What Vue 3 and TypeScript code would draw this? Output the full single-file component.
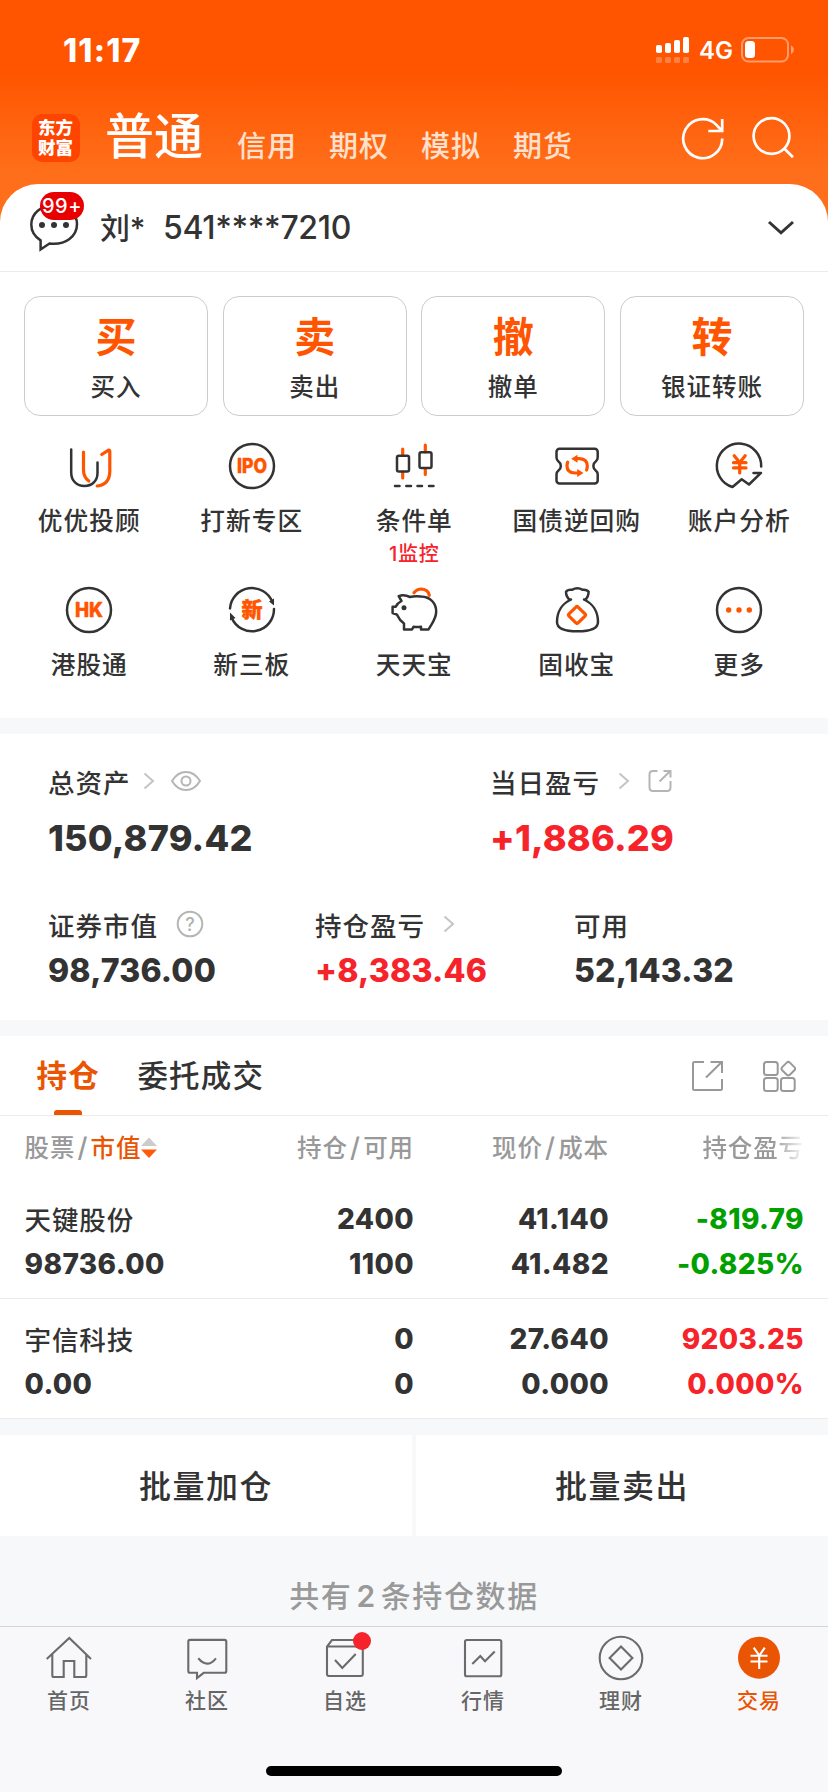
<script setup lang="ts">
interface Holding {
  name: string
  value: string
  qty: string
  available: string
  price: string
  cost: string
  profit: string
  rate: string
  trend: 'up' | 'down'
}

const markets: string[] = ['信用', '期权', '模拟', '期货']

const actions: { glyph: string; label: string }[] = [
  { glyph: '买', label: '买入' },
  { glyph: '卖', label: '卖出' },
  { glyph: '撤', label: '撤单' },
  { glyph: '转', label: '银证转账' },
]

const tools: { id: string; label: string; note?: string }[] = [
  { id: 'advisor', label: '优优投顾' },
  { id: 'ipo', label: '打新专区' },
  { id: 'candle', label: '条件单', note: '1监控' },
  { id: 'bond', label: '国债逆回购' },
  { id: 'analysis', label: '账户分析' },
  { id: 'hk', label: '港股通' },
  { id: 'neeq', label: '新三板' },
  { id: 'piggy', label: '天天宝' },
  { id: 'bag', label: '固收宝' },
  { id: 'more', label: '更多' },
]

const holdings: Holding[] = [
  { name: '天键股份', value: '98736.00', qty: '2400', available: '1100', price: '41.140', cost: '41.482', profit: '-819.79', rate: '-0.825%', trend: 'down' },
  { name: '宇信科技', value: '0.00', qty: '0', available: '0', price: '27.640', cost: '0.000', profit: '9203.25', rate: '0.000%', trend: 'up' },
]

const nav: { id: string; label: string }[] = [
  { id: 'home', label: '首页' },
  { id: 'community', label: '社区' },
  { id: 'watch', label: '自选' },
  { id: 'quotes', label: '行情' },
  { id: 'wealth', label: '理财' },
  { id: 'trade', label: '交易' },
]
</script>

<template>
  <div class="screen">
    <header class="top">
      <div class="status">
        <span class="clock">11:17</span>
        <div class="status-right">
          <svg class="signal" width="34" height="28" viewBox="0 0 34 28" fill="#fff">
            <rect x="0" y="9" width="6" height="8" rx="1.8" />
            <rect x="9" y="7" width="6" height="10" rx="1.8" />
            <rect x="18" y="4" width="6" height="13" rx="1.8" />
            <rect x="27" y="1" width="6" height="16" rx="1.8" />
            <g opacity=".25">
              <rect x="0" y="21" width="6" height="6" rx="1.5" />
              <rect x="9" y="21" width="6" height="6" rx="1.5" />
              <rect x="18" y="21" width="6" height="6" rx="1.5" />
              <rect x="27" y="21" width="6" height="6" rx="1.5" />
            </g>
          </svg>
          <span class="net">4G</span>
          <svg class="battery" width="54" height="26" viewBox="0 0 54 26">
            <rect x="1" y="1" width="46" height="23.5" rx="6.5" fill="none" stroke="#fff" stroke-opacity=".42" stroke-width="2" />
            <path d="M50 8.5a4.6 4.6 0 0 1 0 8.5z" fill="#fff" fill-opacity=".45" />
            <rect x="4" y="4" width="10" height="17" rx="3.5" fill="#fff" />
          </svg>
        </div>
      </div>
      <div class="market-bar">
        <div class="logo">东方财富</div>
        <span class="market-current">普通</span>
        <span v-for="m in markets" :key="m" class="market">{{ m }}</span>
        <svg class="top-icons" width="114" height="48" viewBox="0 0 114 48" fill="none" stroke="#fff" stroke-width="2.7">
          <path d="M41.2 24.5A19.5 19.5 0 1 1 35.2 10.6L41 17M27.3 17H41.2V5" />
          <circle cx="90.5" cy="22" r="17.9" />
          <path d="M103 34.3L112 43.3" />
        </svg>
      </div>
    </header>

    <section class="sheet">
      <div class="account">
        <div class="msg">
          <svg width="50" height="48" viewBox="0 0 50 48" fill="none" stroke="#333" stroke-width="2.5">
            <path d="M10.600 45.500V36.400C4.500 32.500 1.300 27 1.300 20.500C1.300 9.500 11 1.300 24 1.300S47 9.500 47 20C47 32 36 41.500 19.500 39.500Z" />
            <g fill="#333" stroke="none">
              <circle cx="12" cy="21" r="3" /><circle cx="24" cy="21" r="3" /><circle cx="36" cy="21" r="3" />
            </g>
          </svg>
          <span class="msg-badge">99+</span>
        </div>
        <span class="acc-name">刘*</span>
        <span class="acc-no">541****7210</span>
        <svg class="chevron" width="28" height="17" viewBox="0 0 28 17" fill="none" stroke="#333" stroke-width="3">
          <path d="M2 2L14 12.800L26 2" />
        </svg>
      </div>

      <div class="actions">
        <button v-for="a in actions" :key="a.glyph" class="action">
          <b>{{ a.glyph }}</b>
          <span>{{ a.label }}</span>
        </button>
      </div>

      <div class="tools">
        <div v-for="t in tools" :key="t.id" class="tool">
          <svg width="48" height="48" viewBox="0 0 48 48" class="tool-icon">
            <g v-if="t.id === 'advisor'">
              <path d="M6.200 7.500V30.500C6.200 39 12 44 19.400 44S32.500 39 32.500 31V20.500" />
              <path class="o" d="M18.500 10V28Q18.500 35 23.800 39" />
              <path class="o" d="M36.700 12.500L43.200 8.300Q44.800 7.500 44.800 9.500V29Q44.800 42.500 32.200 44" />
            </g>
            <g v-else-if="t.id === 'ipo'">
              <circle cx="24" cy="24" r="22" />
              <text x="24" y="31.300" font-size="20" textLength="30" lengthAdjust="spacingAndGlyphs">IPO</text>
            </g>
            <g v-else-if="t.id === 'candle'">
              <path class="o" d="M12.700 7V13M12.700 30V36M35.300 3V10M35.300 27V32.500" />
              <rect x="7" y="13.700" width="12" height="15.800" rx="1.800" />
              <rect x="29.500" y="10.300" width="12" height="15.800" rx="1.800" />
              <path d="M5 44H9.500M16.300 44H21M27.500 44H32M39 44H43.500" />
            </g>
            <g v-else-if="t.id === 'bond'">
              <path d="M6.500 6.700H41.700a3 3 0 0 1 3 3V15.500q0 2.500-2 4a5.500 5.500 0 0 0 0 9q2 1.500 2 4V38.500a3 3 0 0 1-3 3H6.500a3 3 0 0 1-3-3V32.500q0-2.500 2-4a5.500 5.500 0 0 0 0-9q-2-1.500-2-4V9.700a3 3 0 0 1 3-3z" />
              <path class="o" d="M22.500 16.700H26.500Q34.300 17 34.300 24Q34.300 26 33.600 28M25.500 31H22Q14 30.700 14 24Q14 22 14.700 20.200" />
              <path class="of" d="M18.200 16.800L24.500 12.800V20.800ZM30.500 31L24.200 27V35Z" />
            </g>
            <g v-else-if="t.id === 'analysis'">
              <path d="M46.200 24.500A22.200 22.200 0 1 0 17.500 45L26.700 37.300L34 42.500L46 30.900H38.500" />
              <path class="o" d="M19.200 13.800L24.700 20.500L30.200 13.800M24.700 20.500V31M18.500 20.700H31M18.500 25.900H31" />
            </g>
            <g v-else-if="t.id === 'hk'">
              <circle cx="24" cy="24" r="22" />
              <text x="24" y="31.200" font-size="20" textLength="28" lengthAdjust="spacingAndGlyphs">HK</text>
            </g>
            <g v-else-if="t.id === 'neeq'">
              <path d="M2 22.500A22 22 0 0 1 44.400 16M46 23A22 22 0 0 1 3.600 31.500" />
              <path class="df" d="M41 15.500L46 12.500V19.500ZM2 26.500V34.500L7.500 32Z" />
              <text x="24" y="31.300" font-size="21">新</text>
            </g>
            <g v-else-if="t.id === 'piggy'">
              <path d="M11.500 15L8.700 10.200Q14 8.200 20 11Q24 9.800 31 10.500C41 10.700 46.200 18 46.200 25.500C46.200 33 42 37 38.500 43.500H31V40.800Q27 41.300 23.500 40.800L22 43.500H14V37.500C10.500 35 8.500 32 7 28.700L2.600 27V20.800H5.500Q7.500 17 11.500 15Z" />
              <circle class="df" cx="14" cy="21.700" r="2.500" />
              <path class="o" d="M24 6.800Q27 3 31.500 3Q38.300 3.500 39.300 9.300" />
            </g>
            <g v-else-if="t.id === 'bag'">
              <path d="M17 14Q13 11 13 5.800Q14.500 3.400 19 3.800Q24.300 .8 29.700 3.800Q34 3.400 35.600 5.800Q35.600 11 32 14C39 17.500 45 25 45 36C45 43 37 45.300 24.500 45.300S4 43 4 36C4 25 10 17.500 17 14M15.800 13.500H18M31 13.500H33" />
              <rect class="o" x="17.600" y="22.600" width="12.800" height="12.800" rx="1.500" transform="rotate(45 24 29)" />
            </g>
            <g v-else>
              <circle cx="24" cy="24" r="22" />
              <circle class="of" cx="13.700" cy="24" r="2.700" /><circle class="of" cx="24" cy="24" r="2.700" /><circle class="of" cx="34.300" cy="24" r="2.700" />
            </g>
          </svg>
          <span class="tool-label">{{ t.label }}</span>
          <span v-if="t.note" class="tool-note">{{ t.note }}</span>
        </div>
      </div>
    </section>

    <section class="assets">
      <div class="asset-row first">
        <div class="asset big">
          <div class="asset-label">总资产
            <svg class="gt" width="12" height="18" viewBox="0 0 12 18"><path d="M1.500 1.500L10 9L1.500 16.500" /></svg>
            <svg class="eye" width="32" height="22" viewBox="0 0 32 22"><path d="M2 11Q7.500 2 16 2T30 11Q24.500 20 16 20T2 11Z" /><circle cx="16" cy="11" r="4.500" /></svg>
          </div>
          <div class="num">150,879.42</div>
        </div>
        <div class="asset big">
          <div class="asset-label">当日盈亏
            <svg class="gt wide" width="12" height="18" viewBox="0 0 12 18"><path d="M1.500 1.500L10 9L1.500 16.500" /></svg>
            <svg class="share" width="24" height="24" viewBox="0 0 24 24"><path d="M9.500 2H5Q1.500 2 1.500 5.500V18.500Q1.500 22 5 22H19Q22.500 22 22.500 18.500V12M11.500 12.500L22 2.200M15.500 2H22.500V8.500" /></svg>
          </div>
          <div class="num up">+1,886.29</div>
        </div>
      </div>
      <div class="asset-row second">
        <div class="asset">
          <div class="asset-label">证券市值
            <svg class="help" width="28" height="28" viewBox="0 0 28 28"><circle cx="14" cy="14" r="12.300" /><text x="14" y="20.500">?</text></svg>
          </div>
          <div class="num">98,736.00</div>
        </div>
        <div class="asset">
          <div class="asset-label">持仓盈亏
            <svg class="gt wide" width="12" height="18" viewBox="0 0 12 18"><path d="M1.500 1.500L10 9L1.500 16.500" /></svg>
          </div>
          <div class="num up">+8,383.46</div>
        </div>
        <div class="asset">
          <div class="asset-label">可用</div>
          <div class="num">52,143.32</div>
        </div>
      </div>
    </section>

    <section class="positions">
      <div class="tabs">
        <span class="tab active">持仓</span>
        <span class="tab">委托成交</span>
        <svg class="tab-icons" width="104" height="34" viewBox="0 0 104 34" fill="none" stroke="#999" stroke-width="2">
          <path d="M12 2H2.500Q1 2 1 3.500V28.500Q1 30 2.500 30H28.500Q30 30 30 28.500V19M14 17.500L29.500 2.300M18.500 2H30V13" />
          <rect x="72" y="2" width="13.700" height="13" rx="2.500" />
          <rect x="72" y="18" width="13.700" height="13" rx="2.500" />
          <rect x="89" y="18" width="13.700" height="13" rx="2.500" />
          <rect x="90.900" y="3.300" width="10.800" height="10.800" rx="2.200" transform="rotate(45 96.300 8.700)" />
        </svg>
      </div>
      <div class="grid head">
        <div>股票<i>/</i><em>市值</em><svg class="sort" width="16" height="22" viewBox="0 0 16 22"><path d="M8 .5L16 9H0Z" fill="#ccc" /><path d="M8 21L16 12.500H0Z" fill="#ff5a09" /></svg></div>
        <div>持仓<i>/</i>可用</div>
        <div>现价<i>/</i>成本</div>
        <div class="fade">持仓盈亏</div>
      </div>
      <div v-for="h in holdings" :key="h.name" class="grid row">
        <div><span class="name">{{ h.name }}</span><span>{{ h.value }}</span></div>
        <div><span>{{ h.qty }}</span><span>{{ h.available }}</span></div>
        <div><span>{{ h.price }}</span><span>{{ h.cost }}</span></div>
        <div :class="h.trend"><span>{{ h.profit }}</span><span>{{ h.rate }}</span></div>
      </div>
    </section>

    <div class="bulk">
      <button>批量加仓</button>
      <button>批量卖出</button>
    </div>
    <div class="summary">共有<span>2</span>条持仓数据</div>

    <nav class="nav">
      <div v-for="n in nav" :key="n.id" class="nav-item" :class="{ on: n.id === 'trade' }">
        <svg width="52" height="48" viewBox="-2 0 52 48">
          <g v-if="n.id === 'home'">
            <path d="M1.700 26L24.300 5L46 26M7.300 21.500V42.500Q7.300 44 8.800 44H18.700V28H29.300V44H39.800Q41.300 44 41.300 42.500V21.500" />
          </g>
          <g v-else-if="n.id === 'community'">
            <path d="M7 6.900H41.500Q43.300 6.900 43.300 8.700V38Q43.300 39.800 41.500 39.800H20.700L14 45V39.800H7Q5.300 39.800 5.300 38V8.700Q5.300 6.900 7 6.900ZM15.300 25.300Q24.300 36 33 25.300" />
          </g>
          <g v-else-if="n.id === 'watch'">
            <path d="M6 13.500H41.800V41Q41.800 43 39.800 43H8Q6 43 6 41V13.500L11 7H41.800V13.500M14 27L21.300 35L34.700 21" />
            <circle class="dot" cx="41" cy="8" r="9" />
          </g>
          <g v-else-if="n.id === 'quotes'">
            <rect x="6" y="7" width="36.300" height="36.300" rx="1.800" />
            <path d="M13.300 31L21.300 23L26 28.300L35.700 18.500" />
          </g>
          <g v-else-if="n.id === 'wealth'">
            <circle cx="24" cy="25" r="21.300" />
            <path d="M24 13.600L35.400 25L24 36.400L12.600 25Z" />
          </g>
          <g v-else>
            <circle class="disc" cx="24" cy="24.700" r="21" />
            <path class="yen" d="M18.700 14.700L24.300 22.500L29.800 14.700M15.500 22.700H32.500M15.500 28.500H32.500M24.200 22V36" />
          </g>
        </svg>
        <span>{{ n.label }}</span>
      </div>
      <div class="home-bar"></div>
    </nav>
  </div>
</template>

<style>
body {
  background: #f7f8fa;
}
</style>

<style scoped>
.screen {
  width: 828px;
  height: 1792px;
  overflow: hidden;
  display: flex;
  flex-direction: column;
  background: #f7f8fa;
  color: #333;
  font-family: Inter, 'Noto Sans CJK SC', sans-serif;
  font-weight: 500;
}
.screen * {
  box-sizing: border-box;
}
svg {
  display: block;
  flex: none;
}
button {
  font: inherit;
  color: inherit;
  padding: 0;
  border: 0;
  background: #fff;
}
.top {
  height: 230px;
  flex: none;
  background: linear-gradient(#ff5500 0, #ff5500 72px, #ff6e1a 170px, #ff6e1a 100%);
  color: #fff;
}
.status {
  height: 96px;
  display: flex;
  justify-content: space-between;
  padding: 30px 33px 0 63px;
}
.clock {
  font-size: 32px;
  line-height: 42px;
  font-weight: 800;
  letter-spacing: 1.2px;
}
.status-right {
  display: flex;
}
.signal {
  margin: 6px 9.500px 0 0;
}
.net {
  font-size: 24px;
  line-height: 42px;
  font-weight: 600;
  width: 32px;
  margin-right: 10px;
}
.battery {
  margin-top: 7px;
}
.market-bar {
  height: 88px;
  display: flex;
  padding-left: 32px;
}
.logo {
  width: 48px;
  height: 48px;
  margin: 18px 25px 0 0;
  border-radius: 10px;
  background: #ff4400;
  padding: 3px 6px 0;
  font: 900 17.500px/20px 'Noto Sans CJK SC', sans-serif;
}
.market-current {
  width: 132px;
  font-size: 49px;
  line-height: 60px;
  margin-top: 11px;
  white-space: nowrap;
}
.market {
  width: 92px;
  font-size: 29px;
  letter-spacing: 1px;
  line-height: 40px;
  margin-top: 31px;
  color: #ffe0cc;
}
.top-icons {
  margin: 18px 0 0 76px;
}
.sheet {
  height: 534px;
  flex: none;
  margin-top: -46px;
  background: #fff;
  border-radius: 38px 38px 0 0;
}
.account {
  height: 88px;
  display: flex;
  padding-left: 30px;
  border-bottom: 1.500px solid #ebebeb;
}
.msg {
  position: relative;
  width: 70px;
  padding-top: 20px;
}
.msg-badge {
  position: absolute;
  left: 10px;
  top: 8px;
  width: 44px;
  height: 28px;
  border-radius: 14px;
  background: #e80000;
  color: #fff;
  font-size: 20px;
  line-height: 28px;
  text-align: center;
  letter-spacing: 0.500px;
}
.acc-name,
.acc-no {
  font-size: 32px;
  line-height: 44px;
  margin-top: 22px;
  letter-spacing: -0.350px;
}
.acc-name {
  width: 63px;
  font-size: 30px;
  white-space: nowrap;
}
.chevron {
  margin: 36px 33px 0 auto;
}
.actions {
  display: grid;
  grid-template-columns: repeat(4, 1fr);
  gap: 14.700px;
  padding: 24px 24px 0;
}
.action {
  height: 120px;
  border: 1.500px solid #ccc;
  border-radius: 16px;
  display: flex;
  flex-direction: column;
  align-items: center;
}
.action b {
  font-size: 41px;
  line-height: 50px;
  font-weight: 700;
  color: #ff5500;
  margin-top: 15px;
}
.action span {
  font-size: 24.500px;
  line-height: 36px;
  letter-spacing: 1px;
  margin: 7px 0 0 0;
}
.tools {
  display: grid;
  grid-template-columns: repeat(5, 162.500px);
  grid-auto-rows: 144px;
  padding: 26px 8px 0;
}
.tool {
  display: flex;
  flex-direction: column;
  align-items: center;
}
.tool-icon {
  fill: none;
  stroke: #333;
  stroke-width: 2.500;
  stroke-linejoin: round;
  stroke-linecap: round;
  overflow: visible;
}
.tool-icon .o {
  stroke: #ff5500;
  stroke-width: 3.200;
}
.tool-icon .of {
  fill: #ff5500;
  stroke: none;
}
.tool-icon .df {
  fill: #333;
  stroke: none;
}
.tool-icon text {
  fill: #ff5500;
  stroke: #ff5500;
  stroke-width: 0.500;
  font-weight: 800;
  text-anchor: middle;
}
.tool-label {
  font-size: 24.700px;
  line-height: 36px;
  letter-spacing: 1px;
  margin: 13px 0 0 0;
  white-space: nowrap;
}
.tool-note {
  font-size: 20px;
  line-height: 26px;
  letter-spacing: 0.800px;
  margin-top: 2px;
  color: #f7232a;
}
.assets {
  height: 286px;
  flex: none;
  margin-top: 16px;
  background: #fff;
}
.asset-row {
  display: grid;
}
.first {
  grid-template-columns: 442px auto;
  padding: 29px 0 0 48px;
}
.second {
  grid-template-columns: 267px 259px auto;
  padding: 46px 0 0 48px;
}
.asset-label {
  display: flex;
  align-items: center;
  height: 36px;
  font-size: 26.500px;
  letter-spacing: 1px;
  white-space: nowrap;
}
.num {
  font-weight: 800;
  font-size: 32px;
  line-height: 40px;
  margin-top: 9px;
  letter-spacing: 0.200px;
}
.big .num {
  font-size: 36px;
  line-height: 44px;
  margin-top: 17px;
}
.up {
  color: #f7232a;
}
.down {
  color: #00a000;
}
.asset-label svg {
  fill: none;
  stroke: #b5b5b5;
  stroke-width: 2;
}
.asset-label .gt {
  margin-left: 12px;
  stroke: #c4c4c4;
}
.asset-label .gt.wide {
  margin-left: 18px;
}
.eye {
  margin-left: 15px;
}
.share {
  margin-left: 18px;
}
.help {
  margin-left: 18px;
}
.help text {
  font-size: 18px;
  fill: #b0b0b0;
  stroke: none;
  text-anchor: middle;
  letter-spacing: 0;
}
.positions {
  height: 383px;
  flex: none;
  margin-top: 16px;
  background: #fff;
}
.tabs {
  height: 80px;
  display: flex;
  padding-left: 36.500px;
  border-bottom: 1.500px solid #ebebeb;
}
.tab {
  position: relative;
  font-size: 30.500px;
  letter-spacing: 1.200px;
  line-height: 44px;
  padding-top: 18px;
  margin-right: 37.500px;
}
.tab.active {
  color: #ea5504;
  font-weight: 700;
}
.tab.active::after {
  content: '';
  position: absolute;
  left: 17.500px;
  bottom: 0;
  width: 28px;
  height: 5px;
  border-radius: 3px 3px 0 0;
  background: #ea5504;
}
.tab-icons {
  margin: 24px 32px 0 auto;
}
.grid {
  display: grid;
  grid-template-columns: 190px 199.500px 195px 195px;
  padding-left: 24.500px;
  text-align: right;
}
.grid > :first-child {
  text-align: left;
}
.head {
  height: 63px;
  font-size: 24.500px;
  letter-spacing: 0.900px;
  line-height: 36px;
  padding-top: 14px;
  color: #999;
  white-space: nowrap;
}
.head i {
  font-style: normal;
  font-size: 27px;
  line-height: 30px;
  margin: 0 2.200px;
}
.head em {
  font-style: normal;
  color: #ea5504;
}
.sort {
  display: inline-block;
  vertical-align: -2px;
  margin-left: 0;
}
.fade {
  -webkit-mask-image: linear-gradient(90deg, #000 84%, transparent 101%);
  mask-image: linear-gradient(90deg, #000 84%, transparent 101%);
}
.row {
  height: 120px;
  padding-top: 18px;
  border-bottom: 1.500px solid #ebebeb;
  font-size: 28px;
  font-weight: 800;
  letter-spacing: 0.400px;
}
.row span {
  display: block;
  height: 45px;
  line-height: 45px;
}
.row .name {
  font-size: 26.500px;
  font-weight: 500;
  letter-spacing: 0.900px;
  line-height: 46px;
}
.bulk {
  flex: none;
  margin-top: 16px;
  display: grid;
  grid-template-columns: 1fr 1fr;
  gap: 4px;
}
.bulk button {
  height: 101px;
  padding-bottom: 4px;
  font-size: 32px;
  letter-spacing: 1.500px;
}
.summary {
  flex: none;
  height: 90px;
  padding-top: 39px;
  line-height: 42px;
  font-size: 30px;
  letter-spacing: 1.600px;
  text-align: center;
  color: #999;
}
.summary span {
  margin: 0 4px;
  font-weight: 600;
}
.nav {
  flex: none;
  position: relative;
  height: 166px;
  display: grid;
  grid-template-columns: repeat(6, 138px);
  border-top: 1.500px solid #d5d5d8;
  background: #f8f8fb;
}
.nav-item {
  display: flex;
  flex-direction: column;
  align-items: center;
  padding-top: 6px;
  font-size: 21px;
  letter-spacing: 1px;
  line-height: 30px;
  color: #666;
}
.nav-item span {
  margin-top: 5px;
}
.nav-item svg {
  fill: none;
  stroke: #6b6b6e;
  stroke-width: 2.100;
  overflow: visible;
}
.nav-item .dot {
  fill: #f7232a;
  stroke: none;
}
.nav-item .disc {
  fill: #ea5504;
  stroke: none;
}
.nav-item .yen {
  stroke: #fff;
}
.nav-item.on {
  color: #ea5504;
}
.home-bar {
  position: absolute;
  left: 266px;
  bottom: 16px;
  width: 296px;
  height: 10px;
  border-radius: 5px;
  background: #000;
}
</style>
